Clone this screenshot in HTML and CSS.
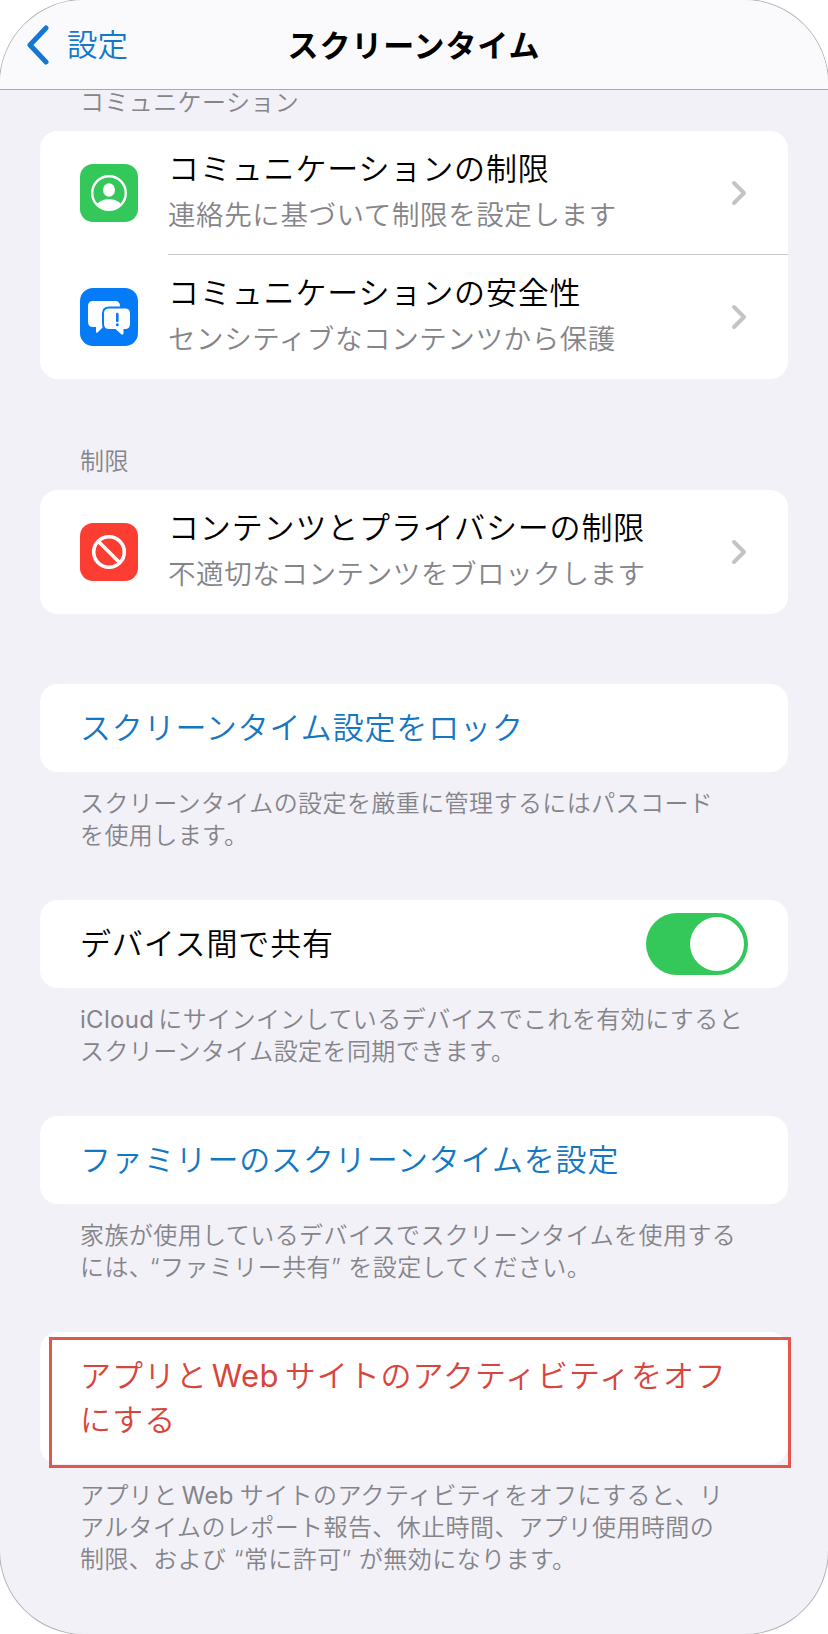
FILE: index.html
```html
<!DOCTYPE html>
<html lang="ja">
<head>
    <meta charset="UTF-8">
    <meta name="viewport" content="width=device-width, initial-scale=1.0">
    <title>スクリーンタイム</title>
    <link rel="stylesheet" href="styles.css">
</head>
<body>

    <div class="phone">
        <header class="navbar">
            <a class="back">
                <svg class="back-icon" width="24" height="40" viewBox="0 0 24 40"><path d="M20 3 L4 20 L20 37"/></svg>
                <span>設定</span>
            </a>
            <h1>スクリーンタイム</h1>
        </header>

        <main>
            <!-- Communication -->
            <section>
                <h2>コミュニケーション</h2>
                <div class="card">
                    <div class="row">
                        <svg class="icon" width="58" height="58" viewBox="0 0 58 58">
                            <rect width="58" height="58" rx="13" fill="#34c759"/>
                            <clipPath id="face"><circle cx="29" cy="29" r="17"/></clipPath>
                            <circle cx="29" cy="29" r="16.8" fill="none" stroke="#fff" stroke-width="2.4"/>
                            <ellipse cx="29" cy="26" rx="6" ry="6.8" fill="#fff"/>
                            <ellipse cx="29" cy="44" rx="13.5" ry="9" fill="#fff" clip-path="url(#face)"/>
                        </svg>
                        <div class="text">
                            <p class="title">コミュニケーションの制限</p>
                            <p class="subtitle">連絡先に基づいて制限を設定します</p>
                        </div>
                        <svg class="chevron" width="16" height="26" viewBox="0 0 16 26"><path d="M3 3 L13 13 L3 23"/></svg>
                    </div>
                    <div class="row">
                        <svg class="icon" width="58" height="58" viewBox="0 0 58 58">
                            <rect width="58" height="58" rx="13" fill="#067bf7"/>
                            <path d="M13 13 H35 Q40 13 40 18 V34 Q40 39 35 39 H23 L17.500 44.500 Q16 45.500 16 43.500 V39 H13 Q8 39 8 34 V18 Q8 13 13 13 Z" fill="#fff"/>
                            <path d="M29 20.500 H45 Q50 20.500 50 25.500 V36 Q50 41 45 41 H43.500 V45.500 Q43 47.500 41 46 L35.500 41 H29 Q24 41 24 36 V25.500 Q24 20.500 29 20.500 Z" fill="#fff" stroke="#067bf7" stroke-width="4" paint-order="stroke"/>
                            <path d="M37.300 26 V33" fill="none" stroke="#067bf7" stroke-width="2.600" stroke-linecap="round"/>
                            <circle cx="37.300" cy="36.800" r="1.500" fill="#067bf7"/>
                        </svg>
                        <div class="text">
                            <p class="title">コミュニケーションの安全性</p>
                            <p class="subtitle">センシティブなコンテンツから保護</p>
                        </div>
                        <svg class="chevron" width="16" height="26" viewBox="0 0 16 26"><path d="M3 3 L13 13 L3 23"/></svg>
                    </div>
                </div>
            </section>

            <!-- Restrictions -->
            <section>
                <h2>制限</h2>
                <div class="card">
                    <div class="row">
                        <svg class="icon" width="58" height="58" viewBox="0 0 58 58">
                            <rect width="58" height="58" rx="13" fill="#fc3d32"/>
                            <g fill="none" stroke="#fff" stroke-width="3.6">
                                <circle cx="29" cy="29" r="15.3"/>
                                <path d="M18.200 18.200 L39.800 39.800"/>
                            </g>
                        </svg>
                        <div class="text">
                            <p class="title">コンテンツとプライバシーの制限</p>
                            <p class="subtitle">不適切なコンテンツをブロックします</p>
                        </div>
                        <svg class="chevron" width="16" height="26" viewBox="0 0 16 26"><path d="M3 3 L13 13 L3 23"/></svg>
                    </div>
                </div>
            </section>

            <section>
                <div class="card single">
                    <a class="title link">スクリーンタイム設定をロック</a>
                </div>
                <p class="note">スクリーンタイムの設定を厳重に管理するにはパスコード<br>を使用します。</p>
            </section>

            <section>
                <div class="card single">
                    <span class="title">デバイス間で共有</span>
                    <span class="switch"></span>
                </div>
                <p class="note"><span class="latin first">iCloud</span>にサインインしているデバイスでこれを有効にすると<br>スクリーンタイム設定を同期できます。</p>
            </section>

            <section>
                <div class="card single">
                    <a class="title link">ファミリーのスクリーンタイムを設定</a>
                </div>
                <p class="note">家族が使用しているデバイスでスクリーンタイムを使用する<br>には<span class="comma">、</span>“ファミリー共有” を設定してください。</p>
            </section>

            <section>
                <div class="card single marked">
                    <a class="title danger">アプリと<span class="latin">Web</span>サイトのアクティビティをオフ<br>にする</a>
                </div>
                <p class="note">アプリと<span class="latin">Web</span>サイトのアクティビティをオフにすると、リ<br>アルタイムのレポート報告、休止時間、アプリ使用時間の<br>制限、および “常に許可” が無効になります。</p>
            </section>
        </main>
    </div>

</body>
</html>
```
FILE: styles.css
```css
* {
    box-sizing: border-box;
}

body {
    margin: 0;
    background-color: #fff;
    font-family: Inter, "Noto Sans CJK JP", sans-serif;
    font-weight: 350;
    color: #000;
}

h1, h2, p {
    margin: 0;
}

.phone {
    height: 1634px;
    background-color: #f2f1f8;
    border-radius: 84px;
    box-shadow: 0 0 0 1px #b4b3b8;
    overflow: hidden;
}

.navbar {
    display: grid;
    grid-template-columns: 1fr auto 1fr;
    align-items: center;
    height: 90px;
    padding: 0 26px;
    background-color: #fafafc;
    border-bottom: 1px solid #aaa6b4;
}

.navbar h1 {
    padding-bottom: 2px;
    font-size: 31px;
    font-weight: 700;
    letter-spacing: 0.9px;
}

.back {
    display: flex;
    align-items: center;
    gap: 17px;
    font-size: 30.5px;
    color: #1477cb;
}

.back span {
    padding-bottom: 3px;
}

.back-icon {
    fill: none;
    stroke: #1477d4;
    stroke-width: 5;
    stroke-linecap: round;
    stroke-linejoin: round;
}

main {
    padding: 0 40px;
}

h2 {
    padding: 1px 0 0 40px;
    margin-bottom: 16px;
    font-size: 24px;
    font-weight: 350;
    line-height: 24px;
    letter-spacing: 0.4px;
    color: #858489;
}

.card {
    background-color: #fff;
    border-radius: 18px;
}

section + section {
    margin-top: 49px;
}

section:nth-child(2),
section:nth-child(3) {
    margin-top: 70px;
}

.row {
    display: flex;
    align-items: center;
    height: 124px;
    padding: 0 0 0 40px;
}

.row .text {
    flex: 1;
    height: 124px;
    padding-top: 15px;
    margin-left: 30px;
}

.row:not(:last-child) .text {
    border-bottom: 1px solid #c6c6c8;
}

.chevron {
    margin-left: -57px;
    margin-right: 41px;
    fill: none;
    stroke: #c4c4c7;
    stroke-width: 4;
    stroke-linecap: round;
    stroke-linejoin: round;
}

.title {
    font-size: 31px;
    line-height: 46px;
    letter-spacing: 0.85px;
}

.subtitle {
    font-size: 27.5px;
    line-height: 46px;
    letter-spacing: 0.6px;
    color: #858489;
}

.single {
    display: flex;
    align-items: center;
    justify-content: space-between;
    min-height: 88px;
    padding: 0 40px;
}

.link {
    color: #1477c4;
}

.danger {
    line-height: 44px;
    letter-spacing: 0.95px;
    color: #d8453c;
}

.note {
    padding: 16px 0 0 40px;
    margin-bottom: -1px;
    font-size: 24px;
    line-height: 32px;
    letter-spacing: 0.42px;
    color: #858489;
    white-space: nowrap;
}

.latin {
    margin: 0 6px 0 4px;
    font-weight: 400;
    letter-spacing: 0.3px;
}

.latin.first {
    margin: 0 4px 0 0;
}

.comma {
    letter-spacing: -3px;
}

.switch {
    width: 102px;
    height: 62px;
    padding: 4px;
    border-radius: 31px;
    background-color: #34c759;
}

.switch::after {
    content: "";
    display: block;
    width: 54px;
    height: 54px;
    margin-left: auto;
    border-radius: 50%;
    background-color: #fff;
}

/* red frame around the last button */
.marked {
    position: relative;
    height: 132px;
    white-space: nowrap;
}

.marked::after {
    content: "";
    position: absolute;
    top: 5px;
    left: 9px;
    width: 736px;
    height: 125px;
    border: 3px solid #e3564e;
}
```
